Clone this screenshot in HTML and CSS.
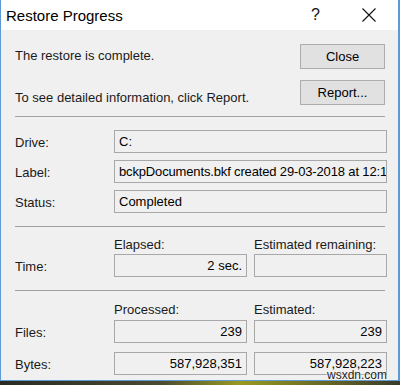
FILE: index.html
```html
<!DOCTYPE html>
<html lang="en">

<head>
    <meta charset="UTF-8">
    <meta name="viewport" content="width=device-width, initial-scale=1.0">
    <title>Restore Progress</title>
    <link rel="stylesheet" href="styles.css">
</head>

<body>
    <div class="window">
        <header class="title-bar">
            <span class="title">Restore Progress</span>
            <span class="title-help">?</span>
            <span class="title-close">
                <svg width="16" height="16" viewBox="0 0 16 16">
                    <path d="M1.5 1.5 L14.5 14.5 M14.5 1.5 L1.5 14.5" stroke="#111" stroke-width="1.1" fill="none"/>
                </svg>
            </span>
        </header>

        <main class="content">
            <section class="top">
                <div class="messages">
                    <p class="msg-first">The restore is complete.</p>
                    <p class="msg-second">To see detailed information, click Report.</p>
                </div>
                <div class="buttons">
                    <button type="button" class="btn">Close</button>
                    <button type="button" class="btn">Report...</button>
                </div>
            </section>

            <hr class="sep">

            <section class="grid info">
                <label>Drive:</label>
                <div class="field wide">C:</div>
                <label>Label:</label>
                <div class="field wide clip">bckpDocuments.bkf created 29-03-2018 at 12:1</div>
                <label>Status:</label>
                <div class="field wide">Completed</div>
            </section>

            <hr class="sep">

            <section class="grid time">
                <span></span>
                <span class="col-head">Elapsed:</span>
                <span class="col-head">Estimated remaining:</span>
                <label>Time:</label>
                <div class="field num">2 sec.</div>
                <div class="field num"></div>
            </section>

            <hr class="sep">

            <section class="grid counts">
                <span></span>
                <span class="col-head">Processed:</span>
                <span class="col-head">Estimated:</span>
                <label>Files:</label>
                <div class="field num">239</div>
                <div class="field num">239</div>
                <label>Bytes:</label>
                <div class="field num">587,928,351</div>
                <div class="field num">587,928,223</div>
            </section>
        </main>
    </div>
    <div class="desktop"></div>
    <span class="watermark">wsxdn.com</span>
</body>

</html>
```

FILE: styles.css
```css
/* Windows style dialog */
body {
    margin: 0;
    width: 400px;
    height: 385px;
    overflow: hidden;
    font-family: "Liberation Sans", Arial, sans-serif;
    font-size: 13px;
    color: #1a1a1a;
    position: relative;
    background: #202020;
}

.window {
    height: 381px;
    box-sizing: border-box;
    border-left: 1px solid #5b9bd5;
    border-right: 2px solid #5b9bd5;
    border-bottom: 1px solid #5b9bd5;
    background: #f0f0f0;
    display: flex;
    flex-direction: column;
}

.title-bar {
    height: 30px;
    background: #fff;
    display: flex;
    align-items: center;
    padding-left: 5px;
}

.title {
    font-size: 15px;
    color: #000;
    flex: 1;
}

.title-help {
    font-size: 16px;
    width: 10px;
    margin-right: 40px;
    color: #111;
}

.title-close {
    width: 16px;
    height: 16px;
    margin-right: 21px;
    display: flex;
}

.content {
    padding: 14px 12px 0 14px;
}

.top {
    display: flex;
}

.messages {
    flex: 1;
}

.messages p {
    margin: 0;
}

.msg-first {
    padding-top: 4px;
}

.msg-second {
    padding-top: 27px;
}

.buttons {
    display: flex;
    flex-direction: column;
    gap: 11px;
    margin-right: 1px;
}

.btn {
    width: 85px;
    height: 25px;
    font-family: inherit;
    font-size: 13px;
    color: #000;
    background: #e1e1e1;
    border: 1px solid #adadad;
    padding: 0;
}

.sep {
    margin: 11px 1px 0 0;
    border: 0;
    border-top: 1px solid #a0a0a0;
    height: 0;
}

.grid {
    display: grid;
    grid-template-columns: 92px 133px 133px;
    column-gap: 7px;
    align-items: center;
}

.grid label {
    padding-top: 1px;
}

.info {
    row-gap: 7px;
    padding-top: 13px;
    padding-bottom: 2px;
}

.time {
    padding-top: 10px;
    padding-bottom: 2px;
}

.counts {
    padding-top: 11px;
    row-gap: 9px;
}

.time .col-head {
    margin-bottom: 2px;
}

.counts .col-head {
    margin-bottom: -6px;
}

.field {
    height: 23px;
    box-sizing: border-box;
    border: 1px solid #a8a8a8;
    background: #f0f0f0;
    color: #000;
    line-height: 21px;
    padding: 0 4px;
    white-space: nowrap;
    overflow: hidden;
}

.clip {
    padding-right: 0;
    letter-spacing: -0.15px;
}

.wide {
    grid-column: 2 / 4;
}

.num {
    text-align: right;
}

.desktop {
    height: 4px;
    background: linear-gradient(90deg, #2a2a22 0%, #4a4a30 40%, #9a9a20 60%, #3a3a2a 100%);
}

.watermark {
    position: absolute;
    right: 13px;
    bottom: 3px;
    font-size: 12px;
    color: #222;
    text-shadow: 0 0 2px #fff, 0 0 2px #fff;
}
```
